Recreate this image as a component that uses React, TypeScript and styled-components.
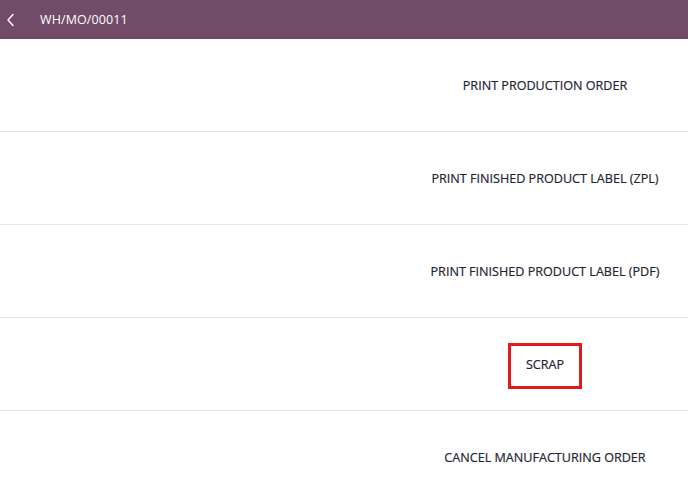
import React from "react";
import styled, { createGlobalStyle } from "styled-components";

const Global = createGlobalStyle`
  html, body { margin: 0; padding: 0; background: #ffffff; }
  body { font-family: "Open Sans", "Noto Sans", sans-serif; }
  * { box-sizing: border-box; }
`;

const Page = styled.div`
  width: 688px;
  height: 483px;
  overflow: hidden;
  display: flex;
  flex-direction: column;
  background: #ffffff;
`;

const Header = styled.header`
  height: 39px;
  flex: 0 0 39px;
  background: #714b67;
  display: flex;
  align-items: center;
  padding-left: 5px;
  gap: 25px;
  color: #ffffff;
`;

const BackButton = styled.span`
  display: flex;
  align-items: center;
  justify-content: center;
  width: 10px;
  height: 20px;
`;

const Title = styled.span`
  font-size: 12.5px;
  color: #ffffff;
  letter-spacing: 0.1px;
`;

const List = styled.div`
  display: flex;
  flex-direction: column;
`;

const Row = styled.div`
  height: 93px;
  flex: 0 0 93px;
  display: grid;
  grid-template-columns: 402px 1fr;
  border-bottom: 1.5px solid #e7e7e7;
  &:last-child { border-bottom: none; }
`;

const Cell = styled.div`
  display: flex;
  align-items: center;
  justify-content: center;
`;

const ActionButton = styled.button<{ $highlight?: boolean }>`
  position: relative;
  border: none;
  background: transparent;
  font-family: "Open Sans", "Noto Sans", sans-serif;
  font-size: 12.6px;
  font-weight: 400;
  color: #1f2633;
  -webkit-text-stroke: 0.2px #1f2633;
  padding: 0;
  cursor: pointer;
  text-transform: uppercase;
  ${(p) =>
    p.$highlight &&
    `
    &::after {
      content: "";
      position: absolute;
      left: -18px;
      right: -18px;
      top: -13px;
      bottom: -16px;
      border: 3.5px solid #e11a1f;
    }
  `}
`;

const actions = [
  { label: "PRINT PRODUCTION ORDER" },
  { label: "PRINT FINISHED PRODUCT LABEL (ZPL)" },
  { label: "PRINT FINISHED PRODUCT LABEL (PDF)" },
  { label: "SCRAP", highlight: true },
  { label: "CANCEL MANUFACTURING ORDER" },
];

export default function App() {
  return (
    <Page>
      <Global />
      <Header>
        <BackButton>
          <svg width="9" height="14" viewBox="0 0 9 14" fill="none">
            <path d="M7 1.5L2 7l5 5.5" stroke="#ffffff" strokeWidth="1.4" strokeLinecap="round" strokeLinejoin="round" />
          </svg>
        </BackButton>
        <Title>WH/MO/00011</Title>
      </Header>
      <List>
        {actions.map((a) => (
          <Row key={a.label}>
            <div />
            <Cell>
              <ActionButton $highlight={a.highlight}>{a.label}</ActionButton>
            </Cell>
          </Row>
        ))}
      </List>
    </Page>
  );
}
